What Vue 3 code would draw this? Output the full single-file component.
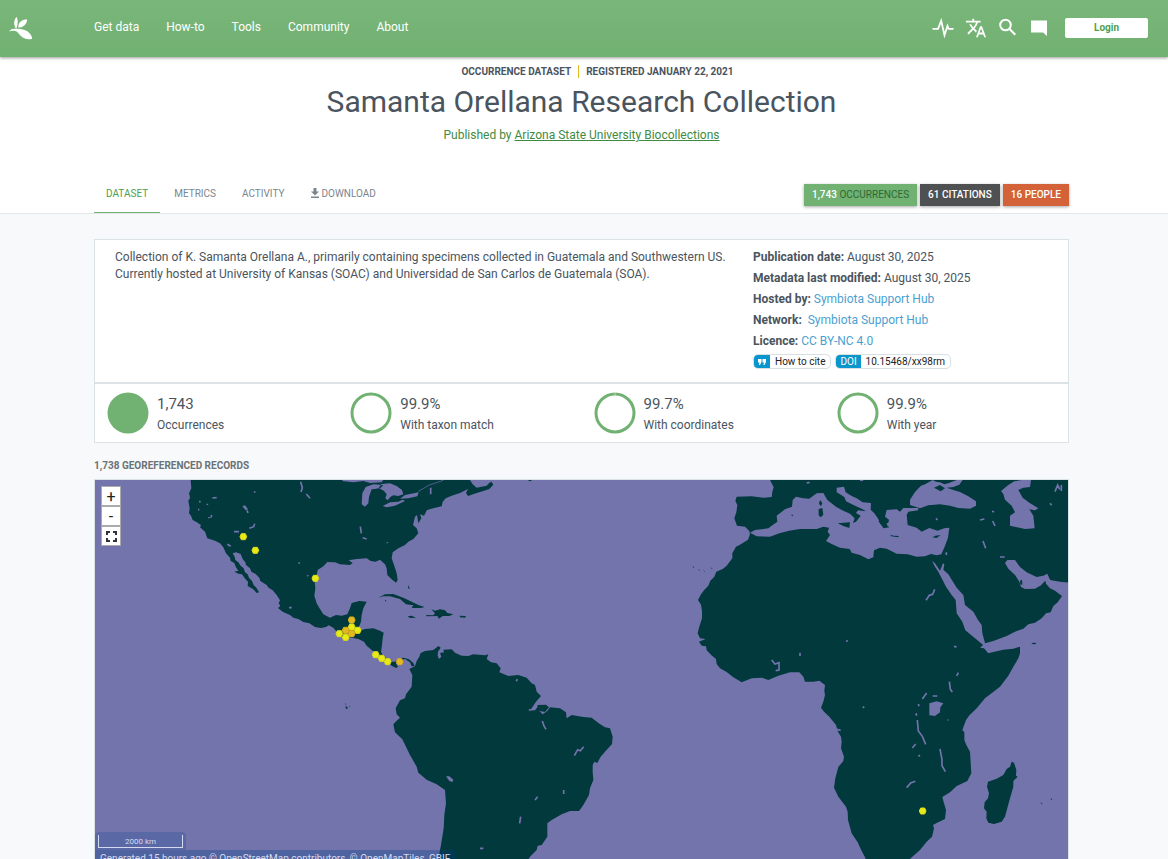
<script setup>
const navItems = ['Get data', 'How-to', 'Tools', 'Community', 'About']

const tabs = [
  { label: 'Dataset', active: true },
  { label: 'Metrics' },
  { label: 'Activity' },
  { label: 'Download', icon: true },
]

const stats = [
  { value: '1,743', label: 'Occurrences', full: true },
  { value: '99.9%', label: 'With taxon match' },
  { value: '99.7%', label: 'With coordinates', gap: true },
  { value: '99.9%', label: 'With year' },
]

const points = [
  [460, 185, 0], [496, 226, 0], [676, 310, 0], [785, 435, 1], [785, 456, 0],
  [803, 466, 0], [767, 466, 1], [748, 476, 0], [785, 476, 1], [767, 487, 0],
  [857, 539, 0], [875, 550, 0], [893, 560, 0], [929, 560, 1], [2498, 1008, 0],
]

const hexagon = ([x, y]) =>
  `${x - 10},${y} ${x - 6},${y - 9} ${x + 6},${y - 9} ${x + 10},${y} ${x + 6},${y + 9} ${x - 6},${y + 9}`
</script>

<template>
  <div class="page">
    <header class="topbar">
      <a href="#" class="logo" aria-label="Home">
        <svg viewBox="0 0 24 24" width="24" height="24" fill="#fff">
          <path d="M7.500 0.800C4.500 4.500 4.500 9 7.200 13c1.600-4 2.300-8.500.3-12.200z" />
          <path d="M9.300 11.500c-.3-4.800 3.200-8.200 8.700-8.300.2 4.500-3.200 8.300-8.700 8.300z" />
          <path d="M0 15.400c2-2.500 4.500-2.900 7-2.500 8.500-.4 15.300 3.200 16.200 9.800-6 1.700-10.500-.7-14.200-6-1.600-1.900-5.600-2.400-9-1.300z" />
        </svg>
      </a>
      <nav class="nav">
        <a v-for="item in navItems" :key="item" href="#">{{ item }}</a>
      </nav>
      <div class="tools">
        <button type="button" aria-label="Health">
          <svg viewBox="0 0 22 20" width="22" height="20" fill="none" stroke="#fff" stroke-width="1.8">
            <path d="M0.500 10.800h5.500l3.200-8 3.300 14.500 3-9.500 1.200 3h4.800" />
          </svg>
        </button>
        <button type="button" aria-label="Language">
          <svg viewBox="0 0 24 24" width="22" height="22" fill="#fff">
            <path d="M12.870 15.070l-2.540-2.510.03-.03A17.520 17.520 0 0 0 14.070 6H17V4h-7V2H8v2H1v2h11.170C11.500 7.920 10.440 9.750 9 11.350 8.070 10.320 7.300 9.190 6.690 8h-2c.73 1.630 1.730 3.170 2.980 4.560l-5.090 5.020L4 19l5-5 3.110 3.110.76-2.040zM18.500 10h-2L12 22h2l1.120-3h4.750L21 22h2l-4.500-12zm-2.620 7l1.620-4.330L19.120 17h-3.240z" />
          </svg>
        </button>
        <button type="button" aria-label="Search">
          <svg viewBox="0 0 20 20" width="20" height="20" fill="none" stroke="#fff" stroke-width="2">
            <circle cx="7.500" cy="7" r="5.300" /><path d="M11.300 10.800l6 6" />
          </svg>
        </button>
        <button type="button" aria-label="Feedback">
          <svg viewBox="0 0 20 20" width="20" height="20" fill="#fff">
            <path d="M2 2.500h16v15.500l-4-3.500H2z" />
          </svg>
        </button>
        <button type="button" class="login">Login</button>
      </div>
    </header>

    <section class="hero">
      <div class="wrap">
        <p class="eyebrow"><span>Occurrence dataset</span><span>Registered January 22, 2021</span></p>
        <h1>Samanta Orellana Research Collection</h1>
        <p class="publisher">Published by <a href="#">Arizona State University Biocollections</a></p>
        <div class="tabrow">
          <nav class="tabs">
            <a v-for="tab in tabs" :key="tab.label" href="#" :class="{ active: tab.active }">
              <svg v-if="tab.icon" viewBox="0 0 8 10" width="8" height="10" fill="currentColor">
                <path d="M2.500 0h3v3.500H8l-4 4-4-4h2.500zM0 8.500h8V10H0z" />
              </svg>
              {{ tab.label }}
            </a>
          </nav>
          <div class="badges">
            <a href="#" class="green">1,743 <span>Occurrences</span></a>
            <a href="#" class="dark">61 Citations</a>
            <a href="#" class="orange">16 People</a>
          </div>
        </div>
      </div>
    </section>

    <main class="wrap">
      <section class="card summary">
        <p class="description">
          Collection of K. Samanta Orellana A., primarily containing specimens collected in Guatemala and Southwestern US.
          Currently hosted at University of Kansas (SOAC) and Universidad de San Carlos de Guatemala (SOA).
        </p>
        <div class="meta">
          <p><b>Publication date:</b> August 30, 2025</p>
          <p><b>Metadata last modified:</b> August 30, 2025</p>
          <p><b>Hosted by:</b> <a href="#">Symbiota Support Hub</a></p>
          <p><b>Network:</b>&nbsp; <a href="#">Symbiota Support Hub</a></p>
          <p><b>Licence:</b> <a href="#">CC BY-NC 4.0</a></p>
          <div class="chips">
            <a href="#" class="chip">
              <i><svg viewBox="0 0 8 6" width="8" height="6" fill="#fff"><path d="M0 0h3.500v3L2 6H.8l.7-2.500H0zM4.500 0H8v3L6.500 6H5.300L6 3.500H4.500z" /></svg></i>
              <span>How to cite</span>
            </a>
            <a href="#" class="chip"><i>DOI</i><span>10.15468/xx98rm</span></a>
          </div>
        </div>
      </section>

      <section class="card stats">
        <div v-for="stat in stats" :key="stat.label" class="stat">
          <svg viewBox="0 0 42 42" width="42" height="42">
            <circle v-if="stat.full" cx="21" cy="21" r="20.500" fill="#71b171" />
            <circle v-else cx="21" cy="21" r="19" fill="none" stroke="#71b171" stroke-width="3" />
            <path v-if="stat.gap" d="M21 0v3.500" stroke="#fff" stroke-width=".5" />
          </svg>
          <div><strong>{{ stat.value }}</strong><span>{{ stat.label }}</span></div>
        </div>
      </section>

      <h2>1,738 Georeferenced records</h2>

      <section class="map" aria-label="Map of georeferenced records">
        <svg class="world" viewBox="15 15 2919 1164" preserveAspectRatio="xMidYMin slice">
          <g class="land">
            <path d="M302 15L304 40 297 55 300 68 295 78 299 100 297 115 303 122 308 135 318 140 333 150 330 157 345 170 352 190 375 197 390 205 400 217 408 235 420 248 422 258 433 264 437 275 445 287 433 290 445 296 456 298 466 312 474 320 473 333 490 343 500 354 507 352 500 340 491 330 486 318 477 308 473 298 465 292 461 280 452 272 445 262 436 255 434 245 428 235 438 232 452 237 458 252 466 262 468 270 480 280 484 290 497 297 508 308 511 318 530 330 536 338 548 346 560 360 570 376 566 385 571 393 564 399 578 410 600 420 610 428 625 432 640 441 658 445 675 456 693 459 708 456 716 451 730 458 740 470 755 485 785 488 805 492 822 500 830 512 845 525 857 535 870 545 880 555 893 562 905 572 918 579 924 575 917 563 930 556 945 552 960 562 965 574 974 574 970 564 957 553 940 548 925 551 915 560 900 560 888 550 878 540 873 530 876 510 878 490 881 473 870 467 850 460 825 462 808 467 807 455 813 440 815 420 820 400 830 380 808 378 785 384 780 400 772 418 755 422 738 420 720 428 700 418 690 402 680 385 673 362 676 340 674 320 680 300 683 285 700 274 712 261 735 262 750 268 780 270 788 264 776 256 800 252 830 250 842 258 857 260 870 254 885 268 890 280 892 300 905 313 918 323 923 315 920 295 912 270 905 250 908 232 925 220 945 210 955 200 970 192 985 175 980 160 969 150 975 125 981 120 985 145 994 130 990 118 1002 122 1011 105 1030 100 1055 94 1058 80 1067 70 1085 62 1110 54 1134 42 1128 54 1134 63 1160 54 1180 48 1198 42 1210 29 1203 18 1190 32 1160 38 1148 28 1140 15z" />
            <path d="M1312 15h14l-5 4z" />
            <path d="M975 574L980 558 988 545 992 534 1005 528 1030 525 1045 513 1052 518 1044 530 1043 542 1047 552 1054 545 1050 534 1062 532 1060 524 1085 523 1095 533 1115 542 1135 543 1150 538 1185 541 1195 538 1190 552 1203 562 1220 565 1232 580 1228 592 1255 603 1285 600 1310 608 1325 625 1335 630 1340 650 1353 663 1338 680 1325 700 1315 707 1335 706 1345 693 1345 705 1358 718 1372 708 1380 697 1410 700 1428 712 1430 730 1445 720 1480 726 1505 728 1525 744 1545 757 1560 760 1568 785 1566 807 1545 830 1532 845 1522 864 1513 860 1508 870 1508 890 1510 915 1500 940 1497 960 1480 990 1467 1008 1440 1008 1415 1018 1385 1035 1372 1045 1372 1085 1355 1110 1343 1112 1340 1125 1320 1145 1308 1165 1300 1185 1050 1185 1047 1140 1053 1110 1061 1060 1063 1020 1068 985 1065 945 1040 928 1010 914 985 893 980 875 960 840 937 793 915 772 910 748 920 737 930 728 920 718 917 700 930 676 945 670 948 658 965 635 967 600 958 582z" />
            <path d="M1342 690L1368 689 1377 697 1365 711 1345 707z" />
            <path d="M865 368L885 358 910 357 940 368 965 380 985 390 1004 396 992 399 965 399 970 391 948 388 930 372 900 364 880 364zM953 424L965 422 978 428 960 429zM1024 403L1035 407 1050 403 1065 406 1072 414 1090 418 1078 423 1058 423 1047 431 1042 423 1010 424 1008 420 1030 421 1035 415zM1109 422L1128 423 1125 428 1110 427zM954 330L960 343 954 339zM885 374l4 2-3 4zM766 683l3 5-2 2zM766 694l6 1 1 6-5 0zM778 692l3 2-2 3z" />
            <path d="M2040 15L2051 37 2047 50 2045 66 2020 68 1985 64 1940 65 1936 78 1942 90 1939 112 1933 130 1941 152 1965 155 1978 168 1980 178 1974 194 1950 209 1938 215 1927 235 1927 250 1910 272 1898 282 1879 290 1873 305 1861 317 1855 332 1842 346 1833 358 1824 375 1833 389 1836 408 1836 430 1827 458 1823 475 1830 490 1847 492 1827 500 1835 512 1848 514 1850 526 1866 542 1878 552 1880 567 1890 580 1910 591 1930 607 1955 622 1985 610 2015 608 2035 615 2065 602 2100 592 2128 592 2140 605 2145 620 2170 620 2188 617 2205 630 2203 647 2205 660 2200 680 2193 698 2202 710 2218 725 2238 750 2244 770 2253 785 2255 800 2253 820 2262 845 2260 858 2245 876 2236 910 2232 938 2245 965 2268 995 2273 1010 2274 1035 2285 1075 2303 1102 2315 1128 2326 1148 2325 1185 2440 1185 2462 1150 2490 1125 2510 1100 2526 1085 2532 1060 2529 1050 2540 1044 2565 1032 2568 1005 2562 985 2557 966 2580 952 2600 933 2632 918 2644 895 2640 830 2629 810 2623 795 2623 772 2617 765 2628 735 2637 722 2660 700 2685 670 2730 635 2755 602 2770 575 2785 550 2790 535 2790 515 2770 521 2740 524 2710 531 2695 535 2682 520 2670 518 2685 505 2710 498 2750 483 2775 470 2800 461 2815 448 2835 443 2855 430 2868 415 2882 412 2890 393 2903 382 2916 363 2895 347 2880 340 2868 326 2865 310 2868 298 2880 315 2910 320 2940 323 2940 15z" />
            <path d="M2765 860L2772 863 2779 885 2778 902 2783 905 2770 918 2770 935 2760 970 2745 1025 2735 1040 2712 1047 2695 1043 2689 1030 2690 1010 2682 1000 2684 982 2694 970 2697 955 2691 935 2694 920 2720 911 2740 900 2750 882 2760 875zM2851 983l6 1-1 4zM2882 970l5 3-4 2z" />
            <path d="M1809 274l2 5M1826 283l3 4M1841 287l3 3M1864 278l2 4" class="speck" />
          </g>
          <g class="water">
            <path d="M1980 173L1995 165 2035 160 2048 150 2062 140 2060 122 2085 103 2106 95 2108 75 2118 65 2140 70 2158 71 2180 55 2200 54 2212 75 2240 97 2260 107 2280 116 2294 130 2289 144 2298 140 2312 122 2298 114 2304 106 2328 109 2315 101 2295 92 2268 79 2263 66 2240 52 2240 38 2262 35 2267 52 2285 63 2300 70 2318 82 2343 84 2342 104 2353 115 2363 129 2370 142 2380 160 2398 157 2386 146 2395 143 2397 134 2385 125 2390 105 2420 103 2430 110 2440 99 2485 99 2484 106 2455 110 2450 120 2453 150 2463 153 2480 158 2495 170 2518 159 2543 167 2563 160 2578 158 2574 188 2564 215 2554 238 2540 241 2523 237 2505 244 2480 245 2453 238 2420 236 2390 221 2370 218 2352 226 2350 247 2335 253 2310 240 2285 233 2279 222 2250 218 2225 207 2208 198 2220 180 2213 170 2217 158 2200 155 2180 162 2130 162 2097 167 2068 175 2040 185 2000 184z" />
            <path d="M2528 15L2505 28 2493 32 2475 51 2460 74 2460 90 2490 100 2515 91 2550 88 2580 92 2605 99 2640 101 2658 92 2658 79 2635 64 2610 51 2590 45 2570 38 2590 36 2608 29 2618 15 2600 15 2575 25 2563 28 2550 22 2538 20z" />
            <path d="M2733 48L2755 30 2773 19 2795 15 2823 15 2820 36 2800 38 2785 45 2798 68 2818 83 2845 100 2835 106 2818 103 2830 122 2834 160 2805 162 2760 152 2760 122 2775 112 2765 92 2745 74 2740 57z" />
            <path d="M2526 258L2535 265 2550 287 2559 265 2563 268 2560 284 2575 298 2600 338 2620 360 2625 390 2650 410 2664 435 2675 450 2677 475 2685 504 2683 513 2655 490 2626 466 2617 440 2600 415 2597 375 2585 360 2568 335 2555 310 2545 290 2535 275z" />
            <path d="M2745 264L2752 255 2775 255 2790 276 2810 292 2840 306 2860 302 2872 296 2882 319 2865 318 2853 331 2835 341 2805 342 2793 336 2788 320 2775 300 2755 281z" />
            <path d="M825 95L815 88 817 55 827 36 850 28 880 30 872 38 855 42 845 43 837 65 835 85zM866 38L882 48 890 58 886 70 893 76 901 66 910 61 925 63 940 58 936 45 920 33 900 25 875 27zM878 93L900 82 925 80 938 74 945 78 915 92 890 97zM930 71L945 60 986 52 982 64 955 70zM755 18L790 22 820 18 840 24 875 22 880 15 760 15z" />
            <path d="M1142 15l10 11 20 6 14-8 16-2 8-7z" />
            <path d="M2518 685L2540 679 2560 685 2551 697 2550 712 2535 723 2518 721z" />
            <path d="M457 94l8-3 9 12-7 3zM1068 904l10 0 12 10-3 7-9-3zM1315 704l8-2-3 5z" />
          </g>
          <path class="lakes" d="M632 20l5 18-4 13M649 57l11 13M811 155l3 20M818 188l12 4M478 160l13-5 3-9M432 170l15 0M412 208l10 6M365 120l-2 8M327 80l5 0M367 69l13-1M352 86v4M324 104h4M494 49v4M471 106l3 8M357 126v4M625 264h5M652 301l2 3M597 398h8M892 202v3M1022 38v20M1357 738l5 15 6 10M1282 612l-3 7M1453 842l10-18 8 3 10-12M1335 975l8-10M1421 945v12M1292 1025l-3 20M1170 1120h10M2508 376l10-15 10-3 6-15M2045 555l10 12 12-4 0 22-10 2M2130 533v10M2268 498h6M2592 514l8 2M2600 603l5-10M2578 620l3 23 6 8M2510 654l-13 18M2528 663h14M2485 687l2 7M2478 715l2 7M2482 735l3 33 12 16 10 24M2467 819l10-12M2485 844l5-3M2550 822l6 32 0 18 10 18M2450 938l12-14 14-5M2318 695l5 3M2573 735h3M2679 198l8 22M2730 246h14M2670 135l13-3M2708 138l7 15M2706 109l6 2M2538 130l4 5M2569 232v8M2895 50l8-20 6 13M2914 30v18M2880 85l5 6M2150 24l9-2M2310 16l10-1M2240 763l12 3" />
          <path class="river" d="M985 49l33-19 42-14" />
          <path class="isles" d="M2243 145L2280 142 2278 159 2260 153zM2390 75l7 9-4 10-6-8z" transform="translate(0 0)" />
          <path class="isles" d="M2190 75l7 9-4 10-6-8zM2186 102l11-3 3 20-8 8-6-6zM2527 187L2536 182 2552 180 2540 189zM2401 179l10 3 16 1-3 4-20-3zM2103 119l7 0-3 5zM2365 138l16-3 11 13-8 6-10-3zM2532 38l18-8 15 10-13 9zM2790 317l6-3 1 16-6-2z" />
          <path class="isles" d="M2824 504l12-1 3 4-10 1z" />
          <g>
            <polygon v-for="(point, i) in points" :key="i" :points="hexagon(point)" :fill="point[2] ? '#e3b91f' : '#e7ea14'" :stroke="point[2] ? '#d9ae20' : '#dbdc1a'" stroke-width="3" stroke-linejoin="round" />
          </g>
        </svg>
        <div class="controls">
          <button type="button" aria-label="Zoom in">+</button>
          <button type="button" aria-label="Zoom out">-</button>
          <button type="button" aria-label="Full screen">
            <svg viewBox="0 0 11 11" width="11" height="11" fill="none" stroke="#333" stroke-width="2">
              <path d="M4 1H1v3M7 1h3v3M4 10H1V7M7 10h3V7" />
            </svg>
          </button>
        </div>
        <div class="legend">
          <div class="scale"><span>2000 km</span></div>
          <div class="credit">Generated 15 hours ago © OpenStreetMap contributors, © OpenMapTiles, GBIF</div>
        </div>
      </section>
    </main>
  </div>
</template>

<style>
html,
body {
  margin: 0;
  background: #f7f9fa;
}
</style>

<style scoped>
* {
  box-sizing: border-box;
}
.page {
  height: 100vh;
  overflow: hidden;
  font: 12px/17px Roboto, sans-serif;
  color: #4a545e;
}
p,
h1,
h2 {
  margin: 0;
}
a {
  text-decoration: none;
  color: inherit;
}
button {
  font: inherit;
  border: 0;
  padding: 0;
  background: none;
  cursor: pointer;
}
svg {
  display: block;
}
.topbar {
  position: relative;
  height: 57px;
  display: flex;
  align-items: center;
  padding: 0 20px 2px 9px;
  background: linear-gradient(#79b67a, #71b171);
  box-shadow: 0 1px 3px rgba(0, 0, 0, 0.4);
  color: #fff;
}
.logo {
  width: 85px;
}
.nav {
  display: flex;
  gap: 27px;
  flex: 1;
}
.tools {
  display: flex;
  align-items: center;
  gap: 11px;
}
.tools .login {
  width: 83px;
  height: 20px;
  margin-left: 5px;
  background: #fff;
  border-radius: 2px;
  color: #4e9f50;
  font-size: 10px;
  font-weight: 700;
}
.hero {
  background: #fff;
  border-bottom: 1px solid #e3e8eb;
  padding-top: 8px;
  text-align: center;
}
.wrap {
  max-width: 990px;
  margin: 0 auto;
  padding: 0 10px 0 5px;
}
.eyebrow {
  display: flex;
  justify-content: center;
  font-size: 10px;
  line-height: 13px;
  font-weight: 700;
  text-transform: uppercase;
  padding-left: 32px;
}
.eyebrow span + span {
  margin-left: 7px;
  padding-left: 7px;
  border-left: 1px solid #e0b91f;
}
h1 {
  margin-top: 6px;
  font-size: 30px;
  line-height: 36px;
  font-weight: 400;
}
.publisher {
  margin-top: 7px;
  color: #3f8a41;
}
.publisher a {
  text-decoration: underline;
}
.tabrow {
  display: flex;
  justify-content: space-between;
  margin-top: 30px;
  height: 39px;
}
.tabs {
  display: flex;
  gap: 2px;
  font-size: 10px;
  text-transform: uppercase;
  color: #7b858f;
}
.tabs a {
  display: flex;
  align-items: center;
  gap: 3px;
  padding: 0 12px;
  border-bottom: 1px solid transparent;
}
.tabs .active {
  color: #4e9f50;
  border-color: #71b171;
}
.badges {
  display: flex;
  align-items: center;
  gap: 3px;
  padding-top: 2px;
  color: #fff;
  font-size: 10px;
  line-height: 22px;
  text-transform: uppercase;
  font-weight: 500;
}
.badges a {
  padding: 0 8px;
  box-shadow: 0 1px 3px rgba(0, 0, 0, 0.35);
}
.green {
  background: #71b171;
}
.green span {
  color: #2c6a35;
  font-weight: 400;
}
.dark {
  background: #4f5052;
}
.orange {
  background: #d36239;
}
.card {
  background: #fff;
  border: 1px solid #dbe3e7;
}
.summary {
  margin-top: 25px;
  display: grid;
  grid-template-columns: 638px 1fr;
  padding: 9px 20px 13px;
}
.description {
  padding-right: 16px;
}
.meta p {
  margin-bottom: 4px;
  white-space: nowrap;
}
.meta b {
  font-weight: 700;
}
.meta p a {
  color: #4b9fd0;
}
.chips {
  display: flex;
  gap: 4px;
}
.chip {
  display: flex;
  height: 15px;
  border: 1px solid #d8e0e4;
  border-radius: 5px;
  overflow: hidden;
  font-size: 10px;
  line-height: 13px;
  color: #222;
}
.chip i {
  display: flex;
  align-items: center;
  padding: 0 4px;
  background: #0996cc;
  color: #fff;
  font-style: normal;
}
.chip span {
  padding: 0 5px;
}
.stats {
  display: grid;
  grid-template-columns: repeat(4, 1fr);
  padding: 8px 0;
}
.stat {
  display: flex;
  align-items: center;
  gap: 8px;
  padding-left: 12px;
}
.stat > div {
  padding-top: 2px;
  margin-bottom: -2px;
}
.stat strong {
  display: block;
  font-size: 15px;
  line-height: 21px;
  font-weight: 400;
}
.stat span {
  display: block;
  line-height: 21px;
}
h2 {
  margin: 16px 0 7px;
  font-size: 10px;
  line-height: 13px;
  font-weight: 700;
  text-transform: uppercase;
  color: #6b7176;
}
.map {
  position: relative;
  height: 390px;
  border: 1px solid #dbe3e7;
  background: #7274ab;
  overflow: hidden;
}
.world {
  width: 100%;
  height: 100%;
}
.land {
  fill: #02393d;
}
.water {
  fill: #7274ab;
}
.lakes {
  fill: none;
  stroke: #7274ab;
  stroke-width: 5;
}
.river {
  fill: none;
  stroke: #7274ab;
  stroke-width: 2;
}
.speck {
  stroke: #02393d;
  stroke-width: 2;
}
.isles {
  fill: #02393d;
}
.controls {
  position: absolute;
  top: 6px;
  left: 6px;
}
.controls button {
  display: flex;
  align-items: center;
  justify-content: center;
  width: 20px;
  height: 20px;
  border: 1px solid #aaa;
  background: #fff;
  color: #222;
  font-size: 16px;
}
.legend {
  position: absolute;
  left: 0;
  bottom: 0;
  color: #d5daf0;
}
.scale {
  width: 91px;
  height: 18px;
  padding: 3px;
  background: #5a69a5;
  border-radius: 4px 4px 0 0;
}
.scale span {
  display: block;
  height: 13px;
  border: 1px solid #d5daf0;
  border-top: 0;
  font-size: 8px;
  line-height: 13px;
  text-align: center;
}
.credit {
  height: 18px;
  padding: 0 5px;
  background: rgba(0, 60, 136, 0.3);
  font-size: 10px;
  line-height: 18px;
}
</style>
